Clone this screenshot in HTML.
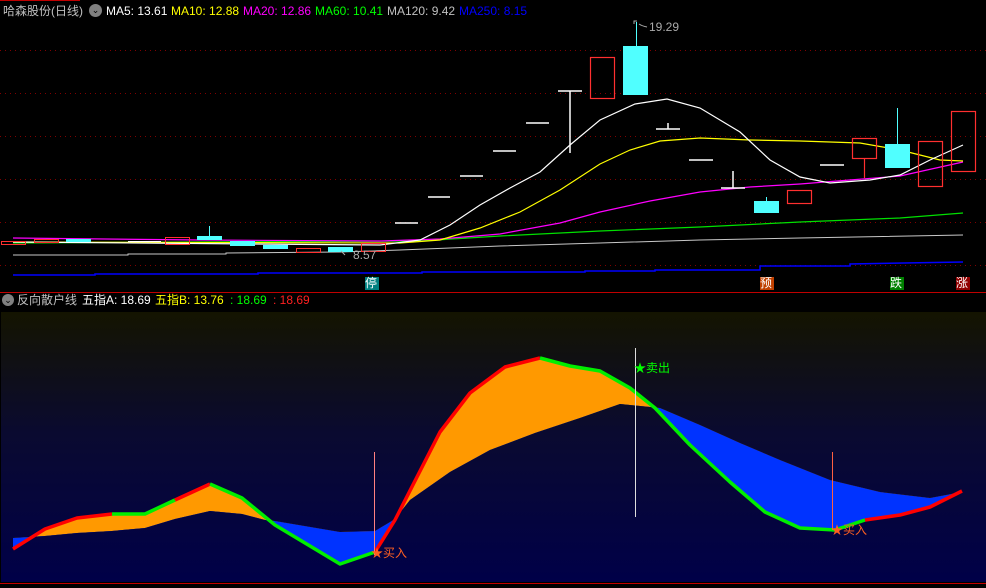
<!DOCTYPE html>
<html><head><meta charset="utf-8"><style>
html,body{margin:0;padding:0;background:#000;width:986px;height:588px;overflow:hidden}
body{position:relative;font-family:"Liberation Sans","Noto Sans CJK SC",sans-serif;font-size:12px}
.t{position:absolute;white-space:nowrap;line-height:14px}
</style></head><body>
<svg width="986" height="588" style="position:absolute;left:0;top:0">
<defs>
<linearGradient id="bg" x1="0" y1="0" x2="0" y2="1">
<stop offset="0" stop-color="#141400"/><stop offset="0.45" stop-color="#0a0a30"/><stop offset="1" stop-color="#000048"/></linearGradient>
<clipPath id="above"><polygon points="0,300 986,300 986,492 962,492 930,498 880,492 830,480 780,460 740,443 700,425 660,408 620,404 580,418 535,433 490,450 450,472 410,500 395,519 385,525 375,531 340,532 275,521 265,520 242,514 210,511 175,519 145,528 112,531 77,533 45,536 13,538 0,538"/></clipPath>
<clipPath id="below"><polygon points="0,588 986,588 986,492 962,492 930,498 880,492 830,480 780,460 740,443 700,425 660,408 620,404 580,418 535,433 490,450 450,472 410,500 395,519 385,525 375,531 340,532 275,521 265,520 242,514 210,511 175,519 145,528 112,531 77,533 45,536 13,538 0,538"/></clipPath>
</defs>
<line x1="0" y1="0.5" x2="80" y2="0.5" stroke="#c00000"/>
<g stroke="#800000" stroke-dasharray="1,4">
<line x1="0" y1="50.5" x2="986" y2="50.5"/><line x1="0" y1="93.5" x2="986" y2="93.5"/><line x1="0" y1="136.5" x2="986" y2="136.5"/><line x1="0" y1="179.5" x2="986" y2="179.5"/><line x1="0" y1="222.5" x2="986" y2="222.5"/><line x1="0" y1="265.5" x2="986" y2="265.5"/>
</g>
<line x1="0" y1="292.5" x2="986" y2="292.5" stroke="#c00000"/>
<polyline fill="none" stroke="#0000ff" stroke-width="1.5" points="13,275 95,275 95,274 258,274 258,273 422,273 422,272 585,272 585,271 655,271 655,270 760,270 760,266 850,266 850,264 963,262"/>
<polyline fill="none" stroke="#c8c8c8" points="13,255 128,255 128,254 226,254 226,253 340,252 400,250 500,246 600,243 700,240 800,238 963,235"/>
<polyline fill="none" stroke="#00e000" stroke-width="1.2" points="13,243 200,242 420,241 500,236 600,231 700,227 800,222 900,218 963,213"/>
<polyline fill="none" stroke="#ff00ff" stroke-width="1.2" points="13,238 200,240 380,241 440,239 500,234 560,223 600,212 650,201 700,192 750,187 800,184 850,180 900,176 963,162"/>
<polyline fill="none" stroke="#ffff00" stroke-width="1.2" points="13,242 400,243 440,240 480,228 520,212 560,190 600,164 630,150 660,141 700,138 750,140 800,141 860,143 900,150 940,160 963,161"/>
<polyline fill="none" stroke="#ffffff" stroke-width="1.2" points="13,242 380,245 420,240 450,225 480,205 510,188 540,172 570,145 600,120 635,104 667,99 700,108 740,132 770,160 800,177 830,183 870,180 900,175 930,160 963,145"/>
<g fill="none" stroke="#ff3030"><rect x="1.5" y="241.5" width="24" height="3"/><rect x="34.5" y="239.5" width="24" height="3"/><rect x="165.5" y="237.5" width="24" height="7"/><rect x="296.5" y="248.5" width="24" height="4"/><rect x="361.5" y="243.5" width="24" height="8"/></g>
<g fill="#50ffff"><rect x="66" y="239" width="25" height="3"/><rect x="197" y="236" width="25" height="4"/><rect x="230" y="241" width="25" height="5"/><rect x="263" y="245" width="25" height="4"/><rect x="328" y="247" width="25" height="5"/></g>
<g stroke="#fff"><line x1="128" y1="241.5" x2="161" y2="241.5"/><line x1="209.5" y1="226" x2="209.5" y2="236" stroke="#50ffff"/></g>
<g stroke="#fff" stroke-width="1.5"><line x1="395" y1="223" x2="418" y2="223"/><line x1="428" y1="197" x2="450" y2="197"/><line x1="460" y1="176" x2="483" y2="176"/><line x1="493" y1="151" x2="516" y2="151"/><line x1="526" y1="123" x2="549" y2="123"/>
<line x1="558" y1="91" x2="582" y2="91"/><line x1="570" y1="91" x2="570" y2="153"/>
<line x1="656" y1="129" x2="680" y2="129"/><line x1="668" y1="123" x2="668" y2="129"/>
<line x1="689" y1="160" x2="713" y2="160"/>
<line x1="721" y1="188" x2="745" y2="188"/><line x1="733" y1="171" x2="733" y2="188"/>
<line x1="820" y1="165" x2="844" y2="165"/></g>
<g fill="none" stroke="#ff3030" stroke-width="1.2"><rect x="590.5" y="57.5" width="24" height="41"/><rect x="787.5" y="190.5" width="24" height="13"/><rect x="852.5" y="138.5" width="24" height="20"/><line x1="864.5" y1="158" x2="864.5" y2="178"/><rect x="918.5" y="141.5" width="24" height="45"/><rect x="951.5" y="111.5" width="24" height="60"/></g>
<g fill="#50ffff"><rect x="623" y="46" width="25" height="49"/><rect x="754" y="201" width="25" height="12"/><rect x="885" y="144" width="25" height="24"/></g>
<g stroke="#50ffff"><line x1="636.5" y1="22" x2="636.5" y2="46"/><line x1="766.5" y1="197" x2="766.5" y2="201"/><line x1="897.5" y1="108" x2="897.5" y2="144"/></g>
<path d="M634 24 L634 21 L637 21 M639 24 Q642 26 647 27" stroke="#aaa" fill="none"/>
<path d="M341 251 L345 255" stroke="#aaa"/>
<rect x="1" y="312" width="985" height="270" fill="url(#bg)"/>
<line x1="0" y1="583.5" x2="986" y2="583.5" stroke="#c00000"/>
<g fill-rule="evenodd">
<polygon clip-path="url(#above)" fill="#ff9900" points="13,549 45,529 77,518 112,514 145,514 175,500 210,484 242,498 275,525 340,564 375,552 395,520 440,432 470,393 505,367 540,358 570,366 600,371 630,388 655,408 690,445 730,482 765,512 800,528 835,530 865,520 900,515 930,507 962,491 962,492 930,498 880,492 830,480 780,460 740,443 700,425 660,408 620,404 580,418 535,433 490,450 450,472 410,500 395,519 385,525 375,531 340,532 275,521 265,520 242,514 210,511 175,519 145,528 112,531 77,533 45,536 13,538"/>
<polygon clip-path="url(#below)" fill="#0033ff" points="13,549 45,529 77,518 112,514 145,514 175,500 210,484 242,498 275,525 340,564 375,552 395,520 440,432 470,393 505,367 540,358 570,366 600,371 630,388 655,408 690,445 730,482 765,512 800,528 835,530 865,520 900,515 930,507 962,491 962,492 930,498 880,492 830,480 780,460 740,443 700,425 660,408 620,404 580,418 535,433 490,450 450,472 410,500 395,519 385,525 375,531 340,532 275,521 265,520 242,514 210,511 175,519 145,528 112,531 77,533 45,536 13,538"/>
</g>
<g fill="none" stroke-width="3.5" stroke-linejoin="round">
<polyline stroke="#ff0000" points="13,549 45,529 77,518 112,514"/>
<polyline stroke="#00ee00" points="112,514 145,514 175,500"/>
<polyline stroke="#ff0000" points="175,500 210,484"/>
<polyline stroke="#00ee00" points="210,484 242,498 275,525 340,564 375,552"/>
<polyline stroke="#ff0000" points="375,552 395,520 440,432 470,393 505,367 540,358"/>
<polyline stroke="#00ee00" points="540,358 570,366 600,371 630,388 655,408 690,445 730,482 765,512 800,528 835,530 865,520"/>
<polyline stroke="#ff0000" points="865,520 900,515 930,507 962,491"/>
</g>
<g stroke-width="1"><line x1="374.5" y1="452" x2="374.5" y2="555" stroke="#ff8080"/><line x1="635.5" y1="348" x2="635.5" y2="517" stroke="#ddd"/><line x1="832.5" y1="452" x2="832.5" y2="530" stroke="#ff6040"/></g>
</svg>
<div class="t" style="left:3px;top:4px;color:#c0c0c0">哈森股份(日线)</div>
<div class="t" style="left:89px;top:4px;width:13px;height:13px;border-radius:50%;background:#808080;color:#000;font-size:9px;line-height:13px;text-align:center">⌄</div>
<div class="t" style="left:106px;top:4px;color:#fff">MA5: 13.61</div>
<div class="t" style="left:171px;top:4px;color:#ffff00">MA10: 12.88</div>
<div class="t" style="left:243px;top:4px;color:#ff00ff">MA20: 12.86</div>
<div class="t" style="left:315px;top:4px;color:#00ff00">MA60: 10.41</div>
<div class="t" style="left:387px;top:4px;color:#c0c0c0">MA120: 9.42</div>
<div class="t" style="left:459px;top:4px;color:#0000ff">MA250: 8.15</div>
<div class="t" style="left:649px;top:20px;color:#aaa">19.29</div>
<div class="t" style="left:353px;top:248px;color:#aaa">8.57</div>
<div class="t" style="left:365px;top:277px;background:#008080;color:#fff;width:14px;height:13px;line-height:13px;font-size:12px">停</div>
<div class="t" style="left:760px;top:277px;background:#c04000;color:#fff;width:14px;height:13px;line-height:13px;font-size:12px">预</div>
<div class="t" style="left:890px;top:277px;background:#008000;color:#fff;width:14px;height:13px;line-height:13px;font-size:12px">跌</div>
<div class="t" style="left:956px;top:277px;background:#900000;color:#fff;width:14px;height:13px;line-height:13px;font-size:12px">涨</div>
<div class="t" style="left:2px;top:294px;width:12px;height:12px;border-radius:50%;background:#808080;color:#000;font-size:9px;line-height:12px;text-align:center">⌄</div>
<div class="t" style="left:17px;top:293px;color:#c0c0c0">反向散户线</div>
<div class="t" style="left:82px;top:293px;color:#fff">五指A: 18.69</div>
<div class="t" style="left:155px;top:293px;color:#ffff00">五指B: 13.76</div>
<div class="t" style="left:230px;top:293px;color:#00ff00">: 18.69</div>
<div class="t" style="left:273px;top:293px;color:#ff2020">: 18.69</div>
<div class="t" style="left:634px;top:361px;color:#00ff00">★卖出</div>
<div class="t" style="left:371px;top:546px;color:#ff6020">★买入</div>
<div class="t" style="left:831px;top:523px;color:#ff6020">★买入</div>
</body></html>
